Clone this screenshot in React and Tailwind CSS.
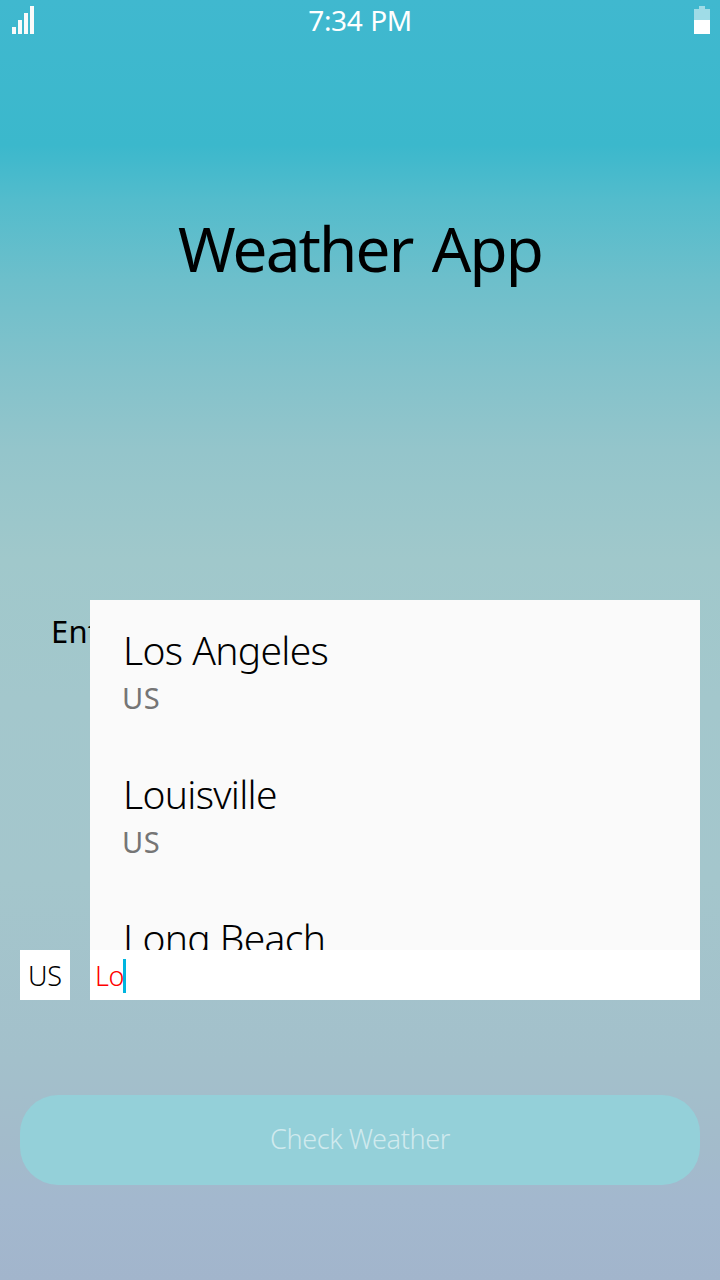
const cities = [
  { name: "Los Angeles", country: "US" },
  { name: "Louisville", country: "US" },
  { name: "Long Beach", country: "US" },
];

function StatusBar() {
  return (
    <header className="grid h-10 grid-cols-3 items-start text-white">
      <svg className="ml-3 mt-1.5" width="22" height="28" viewBox="0 0 22 28" fill="#fafafa" shapeRendering="crispEdges">
        <rect x="0" y="21" width="4" height="7" />
        <rect x="6" y="14" width="4" height="14" />
        <rect x="12" y="7" width="4" height="21" />
        <rect x="18" y="0" width="4" height="28" />
      </svg>
      <time className="whitespace-nowrap text-center text-[28px] leading-10 tracking-[-0.4px] [word-spacing:1px]">7:34 PM</time>
      <svg className="mr-2.5 mt-1.5 justify-self-end" width="16" height="28" viewBox="0 0 16 28" shapeRendering="crispEdges">
        <path d="M5 0h6v3h5v11H0V3h5z" fill="#9fdce7" />
        <rect y="14" width="16" height="14" fill="#fff" />
      </svg>
    </header>
  );
}

export default function App() {
  return (
    <main className="flex h-[1280px] w-[720px] flex-col overflow-hidden bg-[linear-gradient(180deg,#40b8cf_0px,#3bb8cc_145px,#53bccc_200px,#6dbfcb_280px,#83c2cb_370px,#94c5cb_450px,#a0c8cb_560px,#a3c7cc_700px,#a4c6cc_880px,#a3c0cb_1060px,#a3bbcb_1150px,#a3b8ce_1200px,#a2b5cc_1280px)] font-['Noto_Sans',sans-serif] text-black">
      <StatusBar />
      <h1 className="mt-[165px] h-[86px] whitespace-nowrap text-center text-[62px] leading-[86px] tracking-[-1.85px] [word-spacing:5px]">Weather App</h1>
      <div className="relative mt-[309px] h-[400px] px-5">
        <p className="ml-[31px] h-[62px] whitespace-nowrap text-[31px] leading-[62px] tracking-[0.2px]">Enter</p>
        <div className="mt-[288px] flex h-[50px] gap-5">
          <div className="flex w-[50px] items-center justify-center bg-white pt-0.5 text-[27px] font-light">US</div>
          <div className="flex flex-1 items-center bg-white pl-[5px] pt-0.5 text-[27px] font-light text-[#ff0000]">
            <span className="w-7 tracking-[-0.5px]">Lo</span>
            <span className="h-[34px] w-[3px] bg-[#00b5df]" />
          </div>
        </div>
        <ul className="absolute left-[90px] top-0 h-[350px] w-[610px] overflow-hidden bg-[#fafafa] px-8 pt-[22px]">
          {cities.map((city) => (
            <li key={city.name} className="h-36 whitespace-nowrap">
              <p className="h-14 pl-px text-[39px] font-light leading-[56px] tracking-[-0.7px] [word-spacing:0.5px]">{city.name}</p>
              <p className="h-10 text-[29px] leading-10 tracking-[0.5px] text-[#757575]">{city.country}</p>
            </li>
          ))}
        </ul>
      </div>
      <button className="mx-5 mt-[95px] h-[90px] rounded-[38px] bg-[#94d0d9] pb-0.5 text-[27px] font-light tracking-[-0.4px] text-[#d0eaee]">Check Weather</button>
    </main>
  );
}
